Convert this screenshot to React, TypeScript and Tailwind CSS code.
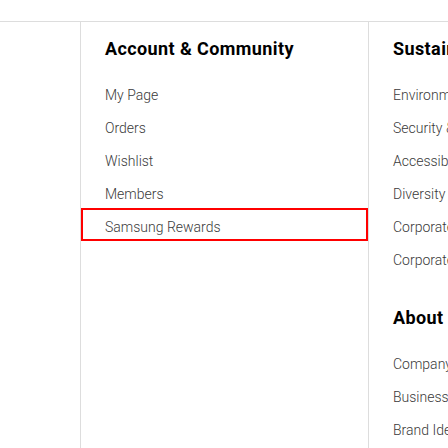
import React from 'react';

const account = ['My Page', 'Orders', 'Wishlist', 'Members', 'Samsung Rewards'];
const sustainability = [
  'Environment',
  'Security & Privacy',
  'Accessibility',
  'Diversity & Inclusion',
  'Corporate Citizenship',
  'Corporate Sustainability',
];
const about = ['Company Info', 'Business Area', 'Brand Identity'];

const Heading: React.FC<{ title: string; className?: string }> = ({ title, className = '' }) => (
  <h3 className={`h-[24px] text-[18px] leading-[24px] font-bold tracking-[0.4px] text-black whitespace-nowrap ${className}`}>
    {title}
  </h3>
);

const LinkList: React.FC<{ items: string[]; focused?: string }> = ({ items, focused }) => (
  <ul>
    {items.map((item) => (
      <li key={item}>
        <a
          href="#"
          className={`block h-[33px] pt-[10px] pl-[24px] text-[14px] leading-[18px] font-light text-[#3a3a3a] whitespace-nowrap ${
            item === focused ? 'outline-2 outline-[#f00] -outline-offset-2' : ''
          }`}
        >
          {item}
        </a>
      </li>
    ))}
  </ul>
);

export default function App() {
  return (
    <div className="w-[448px] h-[448px] overflow-hidden bg-white" style={{ fontFamily: 'Roboto, "Liberation Sans", sans-serif' }}>
      <div className="h-[21px]" />
      <div className="flex h-[427px] border-t border-[#ddd]">
        {/* empty leading column */}
        <div className="w-[80px] shrink-0" />

        {/* Account & Community */}
        <div className="w-[288px] shrink-0 border-l border-[#ddd] pt-[15px]">
          <Heading title="Account & Community" className="pl-[24px] mb-[15px]" />
          <LinkList items={account} focused="Samsung Rewards" />
        </div>

        {/* Sustainability / About Us */}
        <div className="flex-1 min-w-0 overflow-hidden border-l border-[#ddd] pt-[15px]">
          <Heading title="Sustainability" className="pl-[24px] mb-[15px]" />
          <LinkList items={sustainability} />
          <Heading title="About Us" className="pl-[24px] mt-[32px] mb-[15px]" />
          <LinkList items={about} />
        </div>
      </div>
    </div>
  );
}
